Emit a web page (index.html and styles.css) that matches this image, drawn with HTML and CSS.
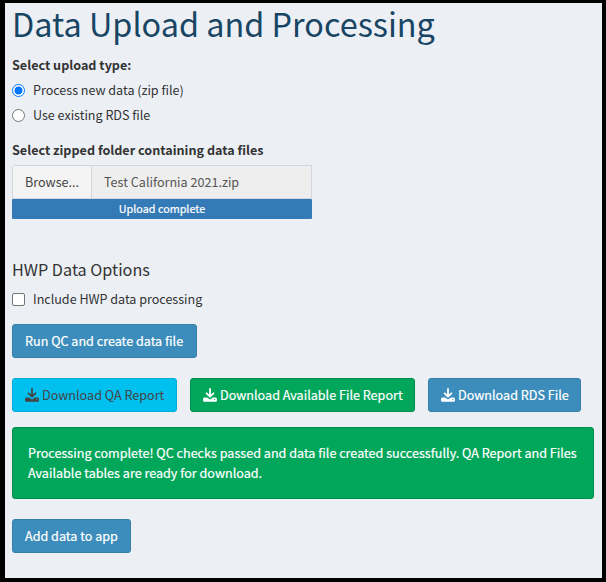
FILE: index.html
```html
<!DOCTYPE html>
<html lang="en">
<head>
<meta charset="utf-8">
<title>Data Upload and Processing</title>
<link rel="stylesheet" href="styles.css">
</head>
<body>
<svg class="defs" aria-hidden="true">
  <symbol id="download" viewBox="0 0 14 14">
    <path d="M7 .9v7.4M3.6 5.3 7 8.7l3.4-3.4" fill="none" stroke="currentColor" stroke-width="1.8" stroke-linecap="round" stroke-linejoin="round"/>
    <path fill="currentColor" fill-rule="evenodd" d="M1.6 9.4h2.4L7 11.6l3-2.2h2.4c.9 0 1.6.7 1.6 1.6v1.2c0 .9-.7 1.6-1.6 1.6H1.6c-.9 0-1.6-.7-1.6-1.6V11c0-.9.7-1.6 1.6-1.6zM11.8 11a.6.6 0 1 0 0 1.2.6.6 0 0 0 0-1.2z"/>
  </symbol>
</svg>
<main class="content">
  <h1><span>Data Upload and Processing</span></h1>
  <fieldset class="group">
    <legend class="label">Select upload type:</legend>
    <label class="option"><span class="radio checked"></span><span>Process new data (zip file)</span></label>
    <label class="option"><span class="radio"></span><span>Use existing RDS file</span></label>
  </fieldset>
  <section class="upload">
    <div class="label"><span>Select zipped folder containing data files</span></div>
    <div class="file">
      <span class="browse">Browse...</span>
      <span class="filename"><span>Test California 2021.zip</span></span>
    </div>
    <div class="progress"><span>Upload complete</span></div>
  </section>
  <h4><span>HWP Data Options</span></h4>
  <label class="option"><span class="checkbox"></span><span>Include HWP data processing</span></label>
  <button class="btn primary run"><span>Run QC and create data file</span></button>
  <div class="downloads">
    <button class="btn info"><svg class="icon"><use href="#download"/></svg><span>Download QA Report</span></button>
    <button class="btn success"><svg class="icon"><use href="#download"/></svg><span>Download Available File Report</span></button>
    <button class="btn primary"><svg class="icon"><use href="#download"/></svg><span>Download RDS File</span></button>
  </div>
  <div class="alert">Processing complete! QC checks passed and data file created successfully. QA Report and Files<br>Available tables are ready for download.</div>
  <button class="btn primary add"><span>Add data to app</span></button>
</main>
</body>
</html>
```
FILE: styles.css
```css
* { box-sizing: border-box; }
body {
  margin: 0;
  height: 582px;
  padding: 3px 4px 4px 5px;
  background: #000;
  color: #333;
  font: 12.6px/20px "Noto Sans CJK SC", "Open Sans", sans-serif;
}
.defs { position: absolute; width: 0; height: 0; }
.content {
  display: flex;
  flex-direction: column;
  align-items: flex-start;
  height: 575px;
  padding: 0 8px 0 7px;
  background: #ecf0f5;
}
h1 { margin: 0; color: #184564; font-size: 32.4px; line-height: 40px; font-weight: 400; }
h4 { margin: 40px 0 0; font-size: 16.2px; line-height: 20px; font-weight: 400; }
.group { border: 0; margin: 12px 0 0; padding: 0; }
.label { padding: 0; font-weight: 700; }
.option { display: flex; align-items: center; gap: 8px; height: 20px; margin-top: 5px; letter-spacing: -.03px; }
h4 + .option { margin-top: 10px; }
.radio { width: 13px; height: 13px; border: 1px solid #767676; border-radius: 50%; background: #fff; }
.radio.checked { border-color: #0075ff; background: radial-gradient(circle, #0075ff 3.7px, #fff 4.3px); }
.checkbox { width: 13px; height: 13px; border: 1px solid #767676; border-radius: 2px; background: #fff; }
.upload { width: 300px; margin-top: 15px; }
.file { display: flex; height: 34px; margin-top: 5px; border: 1px solid #d2d6de; border-radius: 3px 0 0 0; background: #eee; line-height: 32px; }
.browse { width: 79px; padding-left: 12px; border-right: 1px solid #d2d6de; background: #f4f4f4; color: #444; }
.filename { padding-left: 12px; color: #555; }
.progress { height: 20px; border-radius: 1px; background: #337ab7; color: #fff; font-size: 10.8px; line-height: 19px; text-align: center; -webkit-text-stroke: .2px #fff; }
.btn { display: flex; align-items: center; height: 34px; padding: 0 12px; border: 1px solid; border-radius: 3px; color: #fff; font: inherit; white-space: nowrap; -webkit-text-stroke: .2px #fff; }
.primary { background: #3c8dbc; border-color: #367fa9; }
.success { background: #00a65a; border-color: #008d4c; }
.info { background: #00c0ef; border-color: #00acd6; color: #444; -webkit-text-stroke: 0; }
.icon { width: 14px; height: 14px; margin-right: 3px; flex: none; }
.run { width: 185px; margin-top: 15px; }
.downloads { display: flex; gap: 13px; margin-top: 20px; }
.downloads .info { width: 165px; }
.downloads .success { width: 225px; }
.downloads .primary { width: 153px; }
.alert { width: 582px; height: 72px; margin-top: 15px; padding: 15px; border: 1px solid #008d4c; border-radius: 3px; background: #00a65a; color: #fff; white-space: nowrap; -webkit-text-stroke: .2px #fff; }
.add { width: 119px; margin-top: 20px; }
```
